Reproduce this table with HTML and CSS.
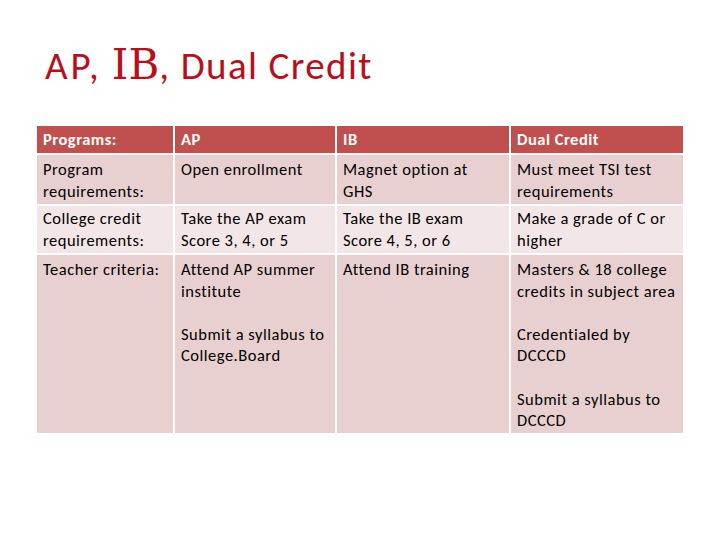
FILE: index.html
```html
<!DOCTYPE html>
<html>
<head>
<meta charset="utf-8">
<link rel="stylesheet" href="styles.css">
</head>
<body>
<div class="slide">
  <h1 class="title"><span class="ap">AP,</span> <span class="ib">IB</span>, Dual Credit</h1>
  <div class="grid">
    <div class="cell head">Programs:</div>
    <div class="cell head">AP</div>
    <div class="cell head">IB</div>
    <div class="cell head">Dual Credit</div>

    <div class="cell dark r2">Program requirements:</div>
    <div class="cell dark r2">Open enrollment</div>
    <div class="cell dark r2">Magnet option at<br>GHS</div>
    <div class="cell dark r2">Must meet TSI test requirements</div>

    <div class="cell light r3">College credit requirements:</div>
    <div class="cell light r3">Take the AP exam<br>Score 3, 4, or 5</div>
    <div class="cell light r3">Take the IB exam<br>Score 4, 5, or 6</div>
    <div class="cell light r3">Make a grade of C or higher</div>

    <div class="cell dark r4">Teacher criteria:</div>
    <div class="cell dark r4"><p>Attend AP summer institute</p><p>Submit a syllabus to College.Board</p></div>
    <div class="cell dark r4"><p>Attend IB training</p></div>
    <div class="cell dark r4"><p>Masters &amp; 18 college credits in subject area</p><p>Credentialed by DCCCD</p><p>Submit a syllabus to DCCCD</p></div>
  </div>
</div>
</body>
</html>
```
FILE: styles.css
```css
html, body {
  margin: 0;
  padding: 0;
  background: #ffffff;
}
.slide {
  width: 720px;
  height: 540px;
  padding: 0 0 0 37px;
  box-sizing: border-box;
  font-family: Carlito, Lato, "Open Sans", sans-serif;
}
.title {
  margin: 0;
  padding: 42px 0 0 8px;
  height: 126px;
  box-sizing: border-box;
  font-weight: normal;
  font-size: 39px;
  line-height: 46px;
  color: #b8101a;
  letter-spacing: 1.4px;
}
.title .ap {
  letter-spacing: 3px;
}
.title .ib {
  font-family: "DejaVu Serif", "Liberation Serif", serif;
  font-size: 42px;
  letter-spacing: 0;
}
.grid {
  display: grid;
  grid-template-columns: 136px 160px 172px 172px;
  grid-template-rows: 27px 49px 47px 178px;
  gap: 2px 2px;
  width: 646px;
}
.cell {
  padding: 4px 6px 0 6px;
  font-size: 16.5px;
  line-height: 21.6px;
  letter-spacing: 0.5px;
  color: #000000;
  box-sizing: border-box;
}
.cell p {
  margin: 0 0 21.6px 0;
}
.head {
  background: #c0504d;
  color: #ffffff;
  font-weight: bold;
  padding-top: 3px;
}
.dark {
  background: #e8d0d0;
}
.light {
  background: #f2e6e6;
}
.r3 {
  padding-top: 2px;
}
```
